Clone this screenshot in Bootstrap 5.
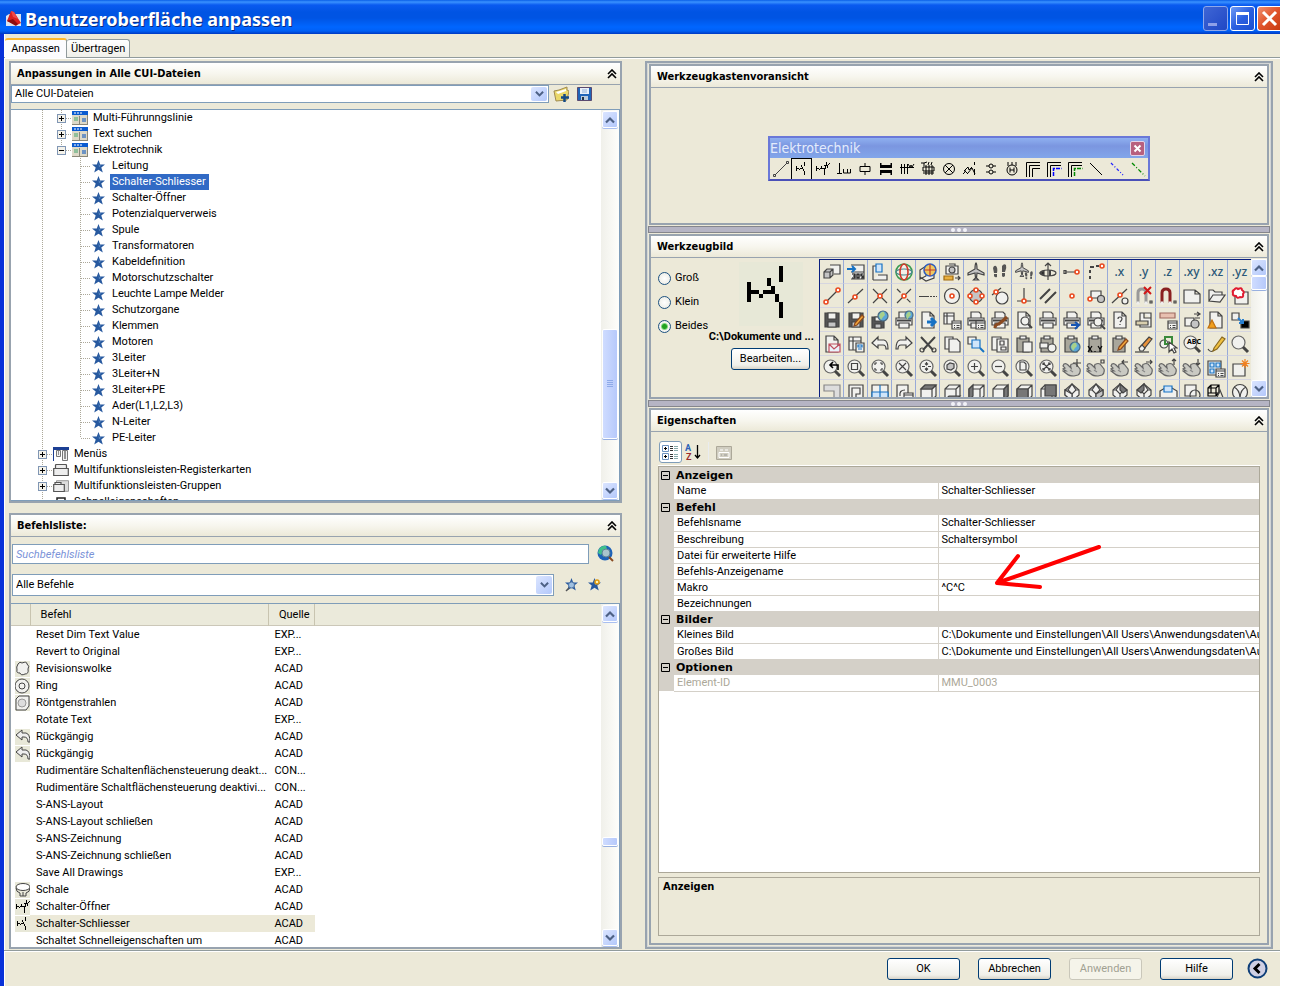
<!DOCTYPE html>
<html lang="de">
<head>
<meta charset="utf-8">
<meta name="viewport" content="width=device-width, initial-scale=1">
<title>Benutzeroberfläche anpassen</title>
<link href="https://cdn.jsdelivr.net/npm/bootstrap@5.3.0/dist/css/bootstrap.min.css" rel="stylesheet">
<style>
:root{--face:#ece9d8;--edge:#98a3af;--field:#7f9db9;--grid:#d4d0c8}
body{font-family:Roboto,"Liberation Sans",Arial,sans-serif;font-size:11px;line-height:16px;color:#000;background:#fff}
button{color:inherit}
svg{display:block;flex:none}
.dialog-window{height:100vh;min-height:900px;margin-right:13px;background:var(--face);border-left:4px solid #0831d9;box-shadow:inset 1px 0 #fff}
.title-strip{height:34px;margin-left:-4px;padding:6px 0 0 6px;background:linear-gradient(#0a5fe8 0,#3a92ff 2px,#0a5af0 5px,#0054e3 12px,#0054e3 18px,#0066ff 27px,#0060f5 31px,#0038c0 34px)}
.title-strip h1{font:bold 18px/26px "Noto Sans","Open Sans",sans-serif;color:#fff;text-shadow:1px 1px #0a2a80;margin:0}
.title-logo{margin:4px 3px 0 0}
.cap-group{gap:2px}
.cap-btn{width:25px;height:25px;padding:0;border:1px solid #fff;border-radius:3px;background:linear-gradient(135deg,#6f9bf5,#2a5fe0 50%,#1a4fd0)}
.cap-btn.dim{border-color:#8fa8ea;background:linear-gradient(135deg,#3f66d5,#1f47c5)}
.cap-btn.stop{border-right:0;border-radius:3px 0 0 3px;width:23px;background:linear-gradient(135deg,#f09070,#e0532b 50%,#c83a10)}
.tabs-strip{height:24px;padding:4px 0 0 1px;border-bottom:1px solid #919b9c}
.tab-btn{height:18px;padding:0 4px;border:1px solid #919b9c;border-left:0;border-bottom:0;border-radius:3px 3px 0 0;background:linear-gradient(#fff,#f0f0ea);line-height:16px;white-space:nowrap;min-width:62px}
.tab-btn.active{height:20px;border-top:2px solid #ffb92c;background:#fcfcfe;margin-bottom:-1px}
.page-area{display:grid;grid-template-columns:minmax(0,613fr) minmax(0,628fr);grid-template-rows:minmax(0,1fr);border-bottom:1px solid #919b9c;border-top:1px solid #fff;padding:2px 7px 1px 5px;column-gap:23px;box-shadow:0 1px #fff}
.left-side{gap:10px}
.right-side{border:2px solid var(--edge);outline:1px solid #d3d6d6;outline-offset:-3px;padding:1px 2px 2px;gap:1px}
.group-box{border:2px solid var(--edge);min-width:0;min-height:0;overflow:hidden}
.upper{flex:442 1 0}.lower{flex:435 1 0}
.group-head{height:22px;flex:none;padding:0 3px 0 6px;background:linear-gradient(#fff,#f7f6ee 50%,#ece9d8);border-bottom:1px solid var(--edge)}
.group-head h2{font:bold 11px/16px "DejaVu Sans Condensed","DejaVu Sans",sans-serif;margin:0}
.plain-btn{border:0;background:none;padding:0}
.file-line{margin-bottom:6px}
.file-tools{gap:8px;padding:0 28px 0 4px}
.search-line{margin-top:7px;padding:0 5px 0 1px;gap:8px}
.filter-line{margin:10px 0 7px;padding-left:1px}
.filter-tools{gap:9px;padding:0 18px 0 11px}
.xp-combo{position:relative}
.xp-combo .form-select,.xp-input{border:1px solid var(--field);border-radius:0;background:#fff;font-size:11px;line-height:16px;padding:0 20px 0 3px;color:#000;min-height:0}
.xp-combo .arrow{position:absolute;right:2px;top:2px;bottom:2px;pointer-events:none}
.arrow,.sb-btn{width:16px;display:flex;align-items:center;justify-content:center;border:0;border-radius:2px;padding:0;background:linear-gradient(135deg,#dbe5ff,#b3c8fb)}
.h18{height:18px}.h20{height:20px}.h22{height:22px}
.xp-input::placeholder{color:#7b93d8;font-style:italic;opacity:1}
.sb{width:18px;flex:none;background:linear-gradient(90deg,#f0f0ea,#fefefb);padding:1px}
.sb.slim{width:16px;padding:0}
.sb-btn{height:17px;flex:none;border:1px solid #fff;box-shadow:0 1px #a9bff0}
.sb-thumb{flex:none;border:1px solid #fff;border-radius:2px;background:linear-gradient(90deg,#cfdcff,#b6c9fb);box-shadow:0 1px #98b0e0;display:flex;align-items:center;justify-content:center}
.thumb-l{height:110px}.thumb-s{height:9px}.thumb-m{height:14px}
.tree-box{border-top:1px solid var(--field);border-right:1px solid var(--field);border-bottom:1px solid var(--field);background:#fff;min-height:0}
.tree{list-style:none;margin:0;padding:0 0 0 22px;overflow:hidden;min-height:0}
.tree li{height:16px;display:flex;align-items:center;white-space:nowrap}
.guide{position:relative;width:19px;height:16px;flex:none}
.guide.v::before,.guide.e::before{content:"";position:absolute;left:9px;top:0;width:1px;height:16px;background:repeating-linear-gradient(#aca899 0 1px,transparent 1px 2px)}
.guide.e::before{height:8px}
.guide.h::after{content:"";position:absolute;left:10px;right:0;top:8px;height:1px;background:repeating-linear-gradient(90deg,#aca899 0 1px,transparent 1px 2px)}
.guide svg{position:absolute;left:5px;top:4px;z-index:1}
.node-icon{margin-left:1px}
.node-text{margin-left:2px;padding:0 2px 0 3px}
.leaf .node-text{margin-left:4px;padding:0 3px 0 2px}
.picked{background:#316ac5;color:#fff}
.list-box{border-top:1px solid var(--field);border-right:1px solid var(--field);background:#fff;min-height:0}
.head-wrap{background:linear-gradient(#ebeadb 0 21px,#cbc7b8 21px 22px,#fff 22px)}
.cmd-table{table-layout:fixed;width:304px;border-collapse:collapse}
.cmd-table td,.cmd-table th{padding:0;height:17px;line-height:16px;white-space:nowrap;overflow:hidden;font-weight:400;text-align:left}
.cmd-table thead th{height:22px;padding-left:10px;border-right:1px solid #c8c4b0}
.cmd-table td:nth-child(2),.cmd-table td:nth-child(3){padding-left:6px}
.cmd-table tr.sel td+td{background:#ece9d8}
.c-ic{width:19px}.c-name{width:238px}.c-src{width:46px}
.cmd-table td svg{margin-left:4px;background:#e8e8d8}
.splitter{height:7px;margin:0 -1px;flex:none;border:1px solid #85868c;background:#b5b4c4;display:flex;align-items:center;justify-content:center}
.preview-zone{height:135px;padding-top:6px}
.floatbar{border:2px solid #6a78d8;border-bottom-color:#4a50b8;background:#6b86dc}
.floatbar-head{height:20px;background:linear-gradient(#8fb0f0,#7b96e0 40%,#82a6ea);color:#e4ecfc;font:14px/20px "DejaVu Sans Condensed","DejaVu Sans",sans-serif;padding-right:3px}
.floatbar-close{width:15px;height:15px;border:1px solid #e4d4e8;border-radius:2px;background:#b8607e;padding:0}
.tool{width:21px;height:21px;border:0;padding:0;background:var(--face);display:flex;align-items:center;justify-content:center}
.tool.on{border:1px solid #000;border-bottom:0}
.image-zone{height:139px;padding-top:1px}
.pick-col{width:168px;flex:none;padding-right:5px}
.radio-col{padding:7px 0 0 7px}
.form-check-xp{display:flex;align-items:center;height:24px;gap:4px}
.form-check-xp .form-check-input{width:13px;height:13px;margin:0;border:1px solid #1c5180;background:radial-gradient(#fff,#e8e8e0)}
.form-check-xp .form-check-input:checked{background:radial-gradient(circle,#21a121 0 2px,#7ed67e 3px,#f4f4f0 4px)}
.thumb-col{width:104px;padding-top:3px;gap:4px}
.glyph-big{background:#e7e8d7;margin-right:11px}
.img-path{font:bold 11px/14px Roboto,"Liberation Sans",sans-serif;white-space:nowrap}
.xp-btn{border:1px solid #003c74;border-radius:3px;background:linear-gradient(#fff,#f0f0ea 80%,#d8d4c8);font-size:11px;line-height:18px;padding:0;height:22px;width:73px;color:#000}
.xp-btn.wide{width:79px;margin-right:4px}
.xp-btn:disabled{border-color:#c9c7ba;background:#f5f4ea;color:#a1a192;opacity:1}
.palette{border-top:1px solid #0a1f80;border-left:1px solid #0a1f80;display:grid;grid-template-columns:repeat(18,24px);grid-auto-rows:24px;overflow:hidden;min-width:0}
.palette button{border:0;border-right:1px solid #98aad8;border-bottom:1px solid #d6d6e0;background:var(--face);padding:0;display:flex;align-items:center;justify-content:center;font:500 12px/16px "Noto Sans",sans-serif;color:#2b5878}
.prop-body{padding:9px 7px 7px}
.prop-tools{height:25px;padding:0 0 2px 1px;gap:3px;border-bottom:1px solid #fff}
.tool-on{border:1px solid #7f9db9;border-radius:3px;background:#fff;width:23px;height:22px;padding:2px}
.prop-frame{border:1px solid #aca899;background:#fff;min-height:0}
.prop-table{table-layout:fixed;width:100%;border-collapse:collapse}
.prop-table td,.prop-table th{height:16px;line-height:15px;padding:0 0 0 3px;white-space:nowrap}
.prop-table td{overflow:hidden;border-bottom:1px solid var(--grid)}
.prop-table .gut,.prop-table .cat th{background:var(--grid);border:0;padding-left:2px}
.prop-table .cat th{font:bold 11px/15px "DejaVu Sans","Liberation Sans",sans-serif}
.prop-table td+td+td{border-left:1px solid var(--grid)}
.prop-table td.marked{overflow:visible;position:relative}
.pointer-note{position:absolute;left:52px;top:-38px;pointer-events:none}
.p-g{width:15px}.p-n{width:44%}
.faded{color:#aca899}
.desc-box{height:59px;flex:none;border:1px solid #aca899;padding:0 4px;font:bold 11px/18px "DejaVu Sans Condensed","DejaVu Sans",sans-serif}
.foot{height:35px;padding:0 12px 0 0;flex:none;gap:14px}
.foot-btns{gap:18px}
</style>
<script src="https://cdn.jsdelivr.net/npm/bootstrap@5.3.0/dist/js/bootstrap.bundle.min.js"></script>
</head>
<body>
<svg width="0" height="0" class="position-absolute" aria-hidden="true">
<symbol id="up2" viewBox="0 0 10 10"><path d="M1 5l4-4 4 4M1 9l4-4 4 4" fill="none" stroke="#000" stroke-width="1.6"/></symbol>
<symbol id="dn" viewBox="0 0 10 8"><path d="M1 1.500l4 4 4-4" fill="none" stroke="#4d6185" stroke-width="2.200"/></symbol>
<symbol id="up" viewBox="0 0 10 8"><path d="M1 6.500l4-4 4 4" fill="none" stroke="#4d6185" stroke-width="2.200"/></symbol>
<symbol id="plus" viewBox="0 0 9 9"><rect x=".5" y=".5" width="8" height="8" fill="#f4f2ea" stroke="#8096b4"/><path d="M2 4.500h5M4.500 2v5" stroke="#000"/></symbol>
<symbol id="minus" viewBox="0 0 9 9"><rect x=".5" y=".5" width="8" height="8" fill="#f4f2ea" stroke="#8096b4"/><path d="M2 4.500h5" stroke="#000"/></symbol>
<symbol id="cat" viewBox="0 0 9 9"><path d="M.5.5h8v8h-8zM2 4.500h5" fill="none" stroke="#000"/></symbol>
<symbol id="star" viewBox="0 0 13 13"><path d="M6.500 0l1.700 4.500H13L9.300 7.600l1.500 5-4.300-2.900-4.300 2.900 1.500-5L0 4.500h4.800z" fill="#27599f"/><path d="M6.500 3l1 2.500h2L7 7z" fill="#5f8fc8"/></symbol>
<symbol id="bar" viewBox="0 0 16 14"><path fill="#0a5bd0" d="M0 0h16v4H0z"/><path d="M2 2h2M5 2h2M8 2h2" stroke="#fff"/><path fill="#ddd9c8" d="M0 4h16v9H0z"/><path d="M0 13.500h16M7.500 5v8M15.500 4v9" stroke="#8a8778"/><path fill="#8fbf9a" d="M2 6h4v4H2z"/><path fill="#6c93c4" d="M10 7h4v4h-4z"/></symbol>
<symbol id="menu" viewBox="0 0 16 14"><path fill="#1c3f94" d="M0 0h16v3H0z"/><path d="M.5 0v14" stroke="#1c3f94"/><path d="M3.500 3.500h4v6h-4zM9.500 3.500h5v10h-5z" fill="#f2f2f2" stroke="#777"/><path d="M5 5h1M5 7h1M11 5h2M11 7h2M11 9h2M11 11h2" stroke="#333"/></symbol>
<symbol id="rtab" viewBox="0 0 16 12"><path d="M.7 4.500h14.600v7H.7zM2.500 4V1.500q0-1 1-1h9q1 0 1 1V4" fill="#eee" stroke="#555" stroke-width="1.200"/></symbol>
<symbol id="rgrp" viewBox="0 0 16 12"><path d="M3.500 4V.7h12v10.600H11" fill="#ddd" stroke="#999"/><path d="M.7 4.500h10.600v7H.7zM2 4V2.500h6v2" fill="#eee" stroke="#555" stroke-width="1.200"/></symbol>
<symbol id="quick" viewBox="0 0 16 14"><path d="M4 3h8v10H4z" fill="#fff" stroke="#222" stroke-width="1.500"/><path d="M6 6h4M6 9h4" stroke="#222"/></symbol>
<symbol id="contact" viewBox="0 0 16 16"><path shape-rendering="crispEdges" stroke="none" fill="#000" d="M2 5h1v5H2zM3 7h2v1H3zM5 8h1v1H5zM6 7h3v1H6zM7 4h1v2H7zM8 6h1v1H8zM9 8h1v2H9zM10 1h1v4h-1zM10 10h1v4h-1z"/></symbol>
</svg>

<div class="dialog-window d-flex flex-column">
  <header class="title-strip d-flex align-items-start flex-shrink-0">
    <svg class="title-logo" width="16" height="18" viewBox="0 0 16 18"><path fill="#dce4ee" d="M0 6l3-2h12v12H0z"/><path fill="#d82020" d="M1 11L5 1l3 1 7 11-4 2z"/><path fill="#8e0d10" d="M1 11l6-2 5 5-2 2z"/><path fill="#f04848" d="M5 1l3 1 4 7-5-2z"/></svg>
    <h1 class="flex-grow-1 text-nowrap">Benutzeroberfläche anpassen</h1>
    <div class="cap-group d-flex">
      <button class="cap-btn dim" aria-label="Minimieren"><svg width="23" height="23"><path fill="#8fa0e8" d="M4 16h9v3H4z"/></svg></button>
      <button class="cap-btn" aria-label="Maximieren"><svg width="23" height="23"><path d="M5.500 6.500h12v11h-12z" fill="none" stroke="#fff"/><path fill="#fff" d="M5 5h13v3H5z"/></svg></button>
      <button class="cap-btn stop" aria-label="Schließen"><svg width="21" height="23"><path d="M5 5l13 13M18 5L5 18" stroke="#fff" stroke-width="3"/></svg></button>
    </div>
  </header>

  <div class="tabs-strip d-flex align-items-end flex-shrink-0" role="tablist">
    <button class="tab-btn active" role="tab">Anpassen</button>
    <button class="tab-btn" role="tab">Übertragen</button>
  </div>

  <main class="page-area flex-grow-1 overflow-hidden">
    <div class="left-side d-flex flex-column">
      <section class="group-box upper d-flex flex-column">
        <div class="group-head d-flex align-items-center justify-content-between"><h2>Anpassungen in Alle CUI-Dateien</h2><button class="plain-btn" aria-label="Einklappen"><svg width="10" height="10"><use href="#up2"/></svg></button></div>
        <div class="file-line d-flex align-items-center flex-shrink-0">
          <div class="xp-combo flex-grow-1"><select class="form-select h18" aria-label="CUI-Dateien"><option>Alle CUI-Dateien</option></select><span class="arrow"><svg width="9" height="8"><use href="#dn"/></svg></span></div>
          <div class="file-tools d-flex">
            <button class="plain-btn" aria-label="Datei laden"><svg width="16" height="16"><path d="M1 5l5-1 8-3v3l2 1-2 9-11 1z" fill="#ead86a" stroke="#a08a50"/><path d="M3 6l10-3v2L5 8z" fill="#fff"/><path d="M11.500 8v8M8 11.500h8" stroke="#134a86" stroke-width="2.500"/></svg></button>
            <button class="plain-btn" aria-label="Speichern"><svg width="15" height="16"><path fill="#1f64b8" stroke="#5a4a70" d="M.5 1.500h14v13H.5z"/><path fill="#e9f0fa" d="M3 2h9v6H3z"/><path d="M5 4h5M5 6h5" stroke="#8fb0d8"/><path fill="#bcd" d="M4 10h7v4H4z"/><path fill="#234" d="M5 11h2v3H5z"/></svg></button>
          </div>
        </div>
        <div class="tree-box d-flex flex-grow-1">
          <ul class="tree flex-grow-1" id="tree"></ul>
          <div class="sb d-flex flex-column"><button class="sb-btn" aria-label="Nach oben"><svg width="10" height="8"><use href="#up"/></svg></button><span style="flex:203"></span><span class="sb-thumb thumb-l"><svg width="6" height="8"><path d="M0 .5h6M0 2.500h6M0 4.500h6M0 6.500h6" stroke="#8eaae8"/></svg></span><span style="flex:44"></span><button class="sb-btn" aria-label="Nach unten"><svg width="10" height="8"><use href="#dn"/></svg></button></div>
        </div>
      </section>

      <section class="group-box lower d-flex flex-column">
        <div class="group-head d-flex align-items-center justify-content-between"><h2>Befehlsliste:</h2><button class="plain-btn" aria-label="Einklappen"><svg width="10" height="10"><use href="#up2"/></svg></button></div>
        <div class="search-line d-flex align-items-center flex-shrink-0">
          <input class="form-control xp-input h20" type="text" placeholder="Suchbefehlsliste" aria-label="Suchbefehlsliste">
          <button class="plain-btn" aria-label="Suchen"><svg width="18" height="18"><circle cx="8" cy="8" r="7.500" fill="#1d62b8"/><path d="M2 4q3-4 7-3l1 3-4 3-2 3-3-2z" fill="#3fc08a"/><circle cx="9" cy="8" r="4" fill="#a9c4cc" stroke="#5f8296"/><path d="M12 12l4 4" stroke="#8a4a20" stroke-width="2"/></svg></button>
        </div>
        <div class="filter-line d-flex align-items-center flex-shrink-0">
          <div class="xp-combo flex-grow-1"><select class="form-select h22" aria-label="Befehlskategorie"><option>Alle Befehle</option></select><span class="arrow"><svg width="9" height="8"><use href="#dn"/></svg></span></div>
          <div class="filter-tools d-flex">
            <button class="plain-btn" aria-label="Befehl suchen"><svg width="14" height="14"><use href="#star" width="13" height="13"/><circle cx="6.500" cy="7" r="3" fill="#9fc0e2" stroke="#4f74a4"/><path d="M4 10l-3 3" stroke="#555" stroke-width="1.500"/></svg></button>
            <button class="plain-btn" aria-label="Neuer Befehl"><svg width="14" height="14"><use href="#star" width="13" height="13"/><circle cx="9" cy="4" r="2" fill="#fff3b0" stroke="#e09a10" stroke-width="1.500"/></svg></button>
          </div>
        </div>
        <div class="list-box d-flex flex-grow-1">
          <div class="flex-grow-1 overflow-hidden head-wrap">
            <table class="cmd-table"><colgroup><col class="c-ic"><col class="c-name"><col class="c-src"></colgroup>
              <thead><tr><th aria-label="Symbol"></th><th>Befehl</th><th>Quelle</th></tr></thead><tbody id="cmds"></tbody></table>
          </div>
          <div class="sb d-flex flex-column"><button class="sb-btn" aria-label="Nach oben"><svg width="10" height="8"><use href="#up"/></svg></button><span style="flex:213"></span><span class="sb-thumb thumb-s"></span><span style="flex:83"></span><button class="sb-btn" aria-label="Nach unten"><svg width="10" height="8"><use href="#dn"/></svg></button></div>
        </div>
      </section>
    </div>

    <div class="right-side d-flex flex-column">
      <section class="group-box flex-shrink-0">
        <div class="group-head d-flex align-items-center justify-content-between"><h2>Werkzeugkastenvoransicht</h2><button class="plain-btn" aria-label="Einklappen"><svg width="10" height="10"><use href="#up2"/></svg></button></div>
        <div class="preview-zone d-flex align-items-center justify-content-center">
          <div class="floatbar">
            <div class="floatbar-head d-flex align-items-center justify-content-between"><span>Elektrotechnik</span><button class="floatbar-close" aria-label="Schließen"><svg width="13" height="13"><path d="M3.500 3.500l6 6M9.500 3.500l-6 6" stroke="#fff" stroke-width="2"/></svg></button></div>
            <div class="d-flex" id="elektro"></div>
          </div>
        </div>
      </section>
      <div class="splitter"><svg width="16" height="4"><g fill="#f2f2f8"><circle cx="2" cy="2" r="2"/><circle cx="8" cy="2" r="2"/><circle cx="14" cy="2" r="2"/></g></svg></div>
      <section class="group-box flex-shrink-0">
        <div class="group-head d-flex align-items-center justify-content-between"><h2>Werkzeugbild</h2><button class="plain-btn" aria-label="Einklappen"><svg width="10" height="10"><use href="#up2"/></svg></button></div>
        <div class="image-zone d-flex">
          <div class="pick-col d-flex justify-content-between">
            <div class="radio-col">
              <label class="form-check-xp"><input class="form-check-input" type="radio" name="size">Groß</label>
              <label class="form-check-xp"><input class="form-check-input" type="radio" name="size">Klein</label>
              <label class="form-check-xp"><input class="form-check-input" type="radio" name="size" checked>Beides</label>
            </div>
            <div class="thumb-col d-flex flex-column align-items-end">
              <svg class="glyph-big" width="64" height="64"><use href="#contact"/></svg>
              <div class="img-path">C:\Dokumente und ...</div>
              <button class="btn xp-btn wide">Bearbeiten...</button>
            </div>
          </div>
          <div class="palette flex-grow-1" id="palette"></div>
          <div class="sb slim d-flex flex-column"><button class="sb-btn" aria-label="Nach oben"><svg width="10" height="8"><use href="#up"/></svg></button><span class="sb-thumb thumb-m"></span><span class="flex-grow-1"></span><button class="sb-btn" aria-label="Nach unten"><svg width="10" height="8"><use href="#dn"/></svg></button></div>
        </div>
      </section>
      <div class="splitter"><svg width="16" height="4"><g fill="#f2f2f8"><circle cx="2" cy="2" r="2"/><circle cx="8" cy="2" r="2"/><circle cx="14" cy="2" r="2"/></g></svg></div>
      <section class="group-box flex-grow-1 d-flex flex-column">
        <div class="group-head d-flex align-items-center justify-content-between"><h2>Eigenschaften</h2><button class="plain-btn" aria-label="Einklappen"><svg width="10" height="10"><use href="#up2"/></svg></button></div>
        <div class="prop-body d-flex flex-column flex-grow-1 overflow-hidden">
          <div class="prop-tools d-flex align-items-center flex-shrink-0">
            <button class="tool-on" aria-label="Nach Kategorien"><svg width="17" height="16"><g fill="#fff" stroke="#6f93c0"><path d="M.5 1.500h6v6h-6zM.5 9.500h6v6h-6z"/></g><path d="M2 4.500h3M3.500 3v3M2 12.500h3M3.500 11v3" stroke="#000"/><path d="M8 2.500h3M8 4.500h3M8 6.500h3M8 10.500h3M8 12.500h3M8 14.500h3" stroke="#333"/><path d="M12 2.500h4M12 4.500h4M12 6.500h4M12 10.500h4M12 12.500h4M12 14.500h4" stroke="#8aa"/></svg></button>
            <button class="plain-btn" aria-label="Alphabetisch"><svg width="16" height="18"><text x="0" y="8" font-size="9" font-weight="bold" fill="#2a62b8">A</text><text x="1" y="17" font-size="9" font-weight="bold" fill="#9a2a2a">Z</text><path d="M12.500 2v13M10 12l2.500 3 2.500-3" stroke="#000" fill="none" stroke-width="1.300"/></svg></button>
            <span class="border-start border-secondary-subtle mx-1 h20"></span>
            <button class="plain-btn" aria-label="Eigenschaftenseiten" disabled><svg width="16" height="15"><path d="M.5 1.500h15v13H.5z" fill="#d0cdc0" stroke="#aca899"/><path d="M3 7.500h10v5H3zM4 5h3M9 5h3" fill="none" stroke="#fff"/><path d="M5 10h1M8 10h3" stroke="#999"/></svg></button>
          </div>
          <div class="prop-frame flex-grow-1 mb-1 overflow-hidden">
            <table class="prop-table"><colgroup><col class="p-g"><col class="p-n"><col></colgroup><tbody id="props"></tbody></table>
          </div>
          <div class="desc-box">Anzeigen</div>
        </div>
      </section>
    </div>
  </main>

  <footer class="foot d-flex align-items-center justify-content-end">
    <div class="foot-btns d-flex"><button class="btn xp-btn">OK</button><button class="btn xp-btn">Abbrechen</button><button class="btn xp-btn" disabled>Anwenden</button><button class="btn xp-btn">Hilfe</button></div>
    <button class="plain-btn" aria-label="Weniger"><svg width="21" height="21"><circle cx="10.500" cy="10.500" r="9" fill="#cfd0e4" stroke="#0f3f78" stroke-width="2"/><path d="M12.500 6l-4.500 4.500 4.500 4.500" fill="none" stroke="#000" stroke-width="3"/></svg></button>
  </footer>
</div>

<script>
const el = id => document.getElementById(id);
const use = (id, w, h) => `<svg width="${w}" height="${h}"><use href="#${id}"/></svg>`;

/* customization tree */
const bars = [['Multi-Führunngslinie','plus'],['Text suchen','plus'],['Elektrotechnik','minus']];
const leaves = ['Leitung','Schalter-Schliesser','Schalter-Öffner','Potenzialquerverweis','Spule','Transformatoren','Kabeldefinition','Motorschutzschalter','Leuchte Lampe Melder','Schutzorgane','Klemmen','Motoren','3Leiter','3Leiter+N','3Leiter+PE','Ader(L1,L2,L3)','N-Leiter','PE-Leiter'];
const tops = [['Menüs','menu',14],['Multifunktionsleisten-Registerkarten','rtab',12],['Multifunktionsleisten-Gruppen','rgrp',12],['Schnelleigenschaften','quick',14]];
el('tree').innerHTML =
  bars.map(([t, x], i) => `<li><span class="guide v"></span><span class="guide h ${i < 2 ? 'v' : 'e'}">${use(x,9,9)}</span><span class="node-icon">${use('bar',16,14)}</span><span class="node-text">${t}</span></li>`).join('') +
  leaves.map((t, i) => `<li class="leaf"><span class="guide v"></span><span class="guide"></span><span class="guide h ${i < 17 ? 'v' : 'e'}"></span><span class="node-icon">${use('star',15,13)}</span><span class="node-text${i === 1 ? ' picked' : ''}">${t}</span></li>`).join('') +
  tops.map(([t, x, h], i) => `<li><span class="guide v ${i < 3 ? 'h' : ''}">${i < 3 ? use('plus',9,9) : ''}</span><span class="node-icon">${use(x,16,h)}</span><span class="node-text">${t}</span></li>`).join('');

/* drawing fragments on a 20 x 20 field */
const p = (d, a = '') => `<path d="${d}" ${a}/>`;
const W = 'fill="#f1f1ee"', G = 'fill="#c4c4c4"', D = 'fill="#777"', BL = 'stroke="#1672c4"', BF = 'fill="#cfe5fa" stroke="#1672c4"';
const red = (x, y) => `<circle cx="${x}" cy="${y}" r="2" fill="#fff" stroke="#ea4a20" stroke-width="1.600"/>`;
const c = (x, y, r, a = '') => `<circle cx="${x}" cy="${y}" r="${r}" ${a}/>`;
const page = p('M4 2h8l4 4v12H4zM12 2v4h4', W);
const dlg = p('M10 11h9v8h-9z', W) + p('M10 13h9M12 15.500h1M14.500 15.500h3M12 17.500h1M14.500 17.500h3');
const disk = p('M3 3h14v14H3z', 'fill="#555"') + p('M6 3h8v6H6z', W) + p('M6 12h8v5H6z', G);
const diskS = p('M2 7h12v11H2z', 'fill="#555"') + p('M5 7h6v4H5z', W) + p('M5 14h6v4H5z', G);
const printer = p('M5 8V2h8l2 2v4M2 8h16v7H2z', W) + p('M5 13h10v5H5z', W) + p('M3 10.500h14', 'stroke-width="2"');
const globe = (x, y, r) => c(x, y, r, 'fill="#5aa6d8" stroke="#4a6a80"') + p(`M${x-r+1} ${y}q2-${r} ${r}-${r-1}l1 3-2 2-2 3z`, 'fill="#a7d08a" stroke="none"');
const mag = s => c(8.5, 8.5, 6.5, W + ' stroke="#666"') + p('M13 13l5 5', 'stroke="#444" stroke-width="3"') + s;
const clip = p('M3 4h12v14H3z', 'fill="#a9a79c"') + p('M6 2h6v3H6z', W);
const hand = s => p('M2 6q2-1 4 1l3 3q-1-4 1-4 2-1 4 0l4 5q1 4-2 6l-4 1q-5 0-7-2l-4-3h3l-3-2 2-1-2-2z', 'fill="#c9c9c2" stroke="#666"') + p('M8 12l3 2', 'stroke="#888"') + s;
const cube = s => p('M3 7l4-4h11v11l-4 4H3zM3 7h11v11M14 7l4-4', W) + s;
const iso = s => p('M10 2l7 6v5l-7 6-7-6V8z', W) + p('M10 2l4 6-4 4-4-4zM10 12v7M3 8h3M14 8h3') + s;
const pen = p('M9 13l7-8 2 2-7 8-3 1z', 'fill="#f5a83a" stroke="#8a4a20"');
const plane = p('M10 1q1 1 1 6l7 4v2l-7-2-.5 5 2 2h-5l2-2L9 11l-7 2v-2l7-4q0-5 1-6z', G);
const feet = p('M3 6q1-3 3-2 2 2 1 7H4zM4 12h3v3q-2 1-3-1zM12 4q2-3 4-1 1 3-1 7h-3zM12 11h3v3q-2 2-3 0z', 'fill="#555" stroke="none"');
const arrow = p('M2 9l6-6v3h6q4 1 4 9h-2q0-4-3-4H8v3z', W);
const undo = arrow, redo = `<g transform="matrix(-1 0 0 1 20 0)">${arrow}</g>`;
const magnet = a => p('M4 17V7q0-4 4-4t4 4v10', `stroke="${a}" stroke-width="3"`) + p('M2.500 17h3M10.500 17h3', 'stroke="#eee" stroke-width="3"') + p('M16 15h2v2h-2z');
const inPage = p('M2 3h10v11H2z', W);
const rows = [
 [p('M8 3h10v9h-6', W)+p('M2 10l3-3h6v6l-3 3H2zM2 10h6v6M8 10l3-3', G), p('M5 3h13v14H5M5 10h13', W)+p('M1 7h7M6 4l3 3-3 3', BL+' stroke-width="2"')+p('M6 12h3v4H6M7 14h2M11 12h2v4h-2zM17 12h-2v2h2v2h-2', 'stroke="#000"'), p('M3 18V4h3M3 18h14v-5H8', W)+p('M6 2h6v8H6z', BF), c(10,10,8,'fill="#f3f0e8" stroke="#3a9a50" stroke-width="1.600"')+'<ellipse cx="10" cy="10" rx="8" ry="3" stroke="#4a8a90"/><ellipse cx="10" cy="10" rx="4" ry="8" stroke="#d03a2a" stroke-width="1.600"/>', p('M2 8l6-4v10l-6 3zM2 8v7l6 4 8-3v-4', W)+c(12,8,6,'fill="#f0c860" stroke="#3060c0" stroke-width="1.600"')+p('M6 8h12M12 2v12','stroke="#c03a2a"'), p('M4 4h12v8H4zM7 2h6v2', W)+c(10,8,3,G)+p('M2 14h9v4H2z','fill="#e8b040" stroke="#a06a10"')+p('M13 16h5M16 14l2 2-2 2'), plane, feet, `<g transform="scale(.8)">${plane}</g>`+`<g transform="translate(9 8) scale(.6)">${feet}</g>`, p('M10 2v16M7 4l3-3 3 3','')+'<ellipse cx="10" cy="11" rx="8" ry="3"/>'+p('M2 11l4-2v4z','fill="#222"')+p('M12 8v6','stroke-width="2"'), p('M3 10h10M2 8.500h2v3H2z')+red(15,10), p('M4 17v-3M4 11V8M4 5h4M10 4h3','stroke-width="2"')+red(16,4), '.x','.y','.z','.xy','.xz','.yz'],
 [p('M3 17L17 3')+red(4,16)+red(16,4), p('M2 17L17 3')+red(9,11), p('M3 3l14 14M17 3L3 17')+red(10,10), p('M3 3l14 14','stroke-dasharray="5 2"')+p('M17 3L3 17','stroke-dasharray="9 2"')+red(10,10), p('M1 10.500h10M12 10.500h2M15 10.500h2M18 10.500h1'), c(10,10,7.5,W)+red(10,10), c(10,10,6.5,G)+red(10,4)+red(10,16)+red(4,10)+red(16,10), c(12,12,6,W)+p('M2 9l9-7')+red(6,6), p('M10 2v13M3 15h14')+red(10,15), p('M2 13L12 3M7 17L18 6','stroke-width="2"'), red(10,10), p('M5 5h10v7H5z',W)+c(15,13,3.5,G)+red(4,13), p('M2 17L17 3')+c(15,15,3,W)+red(10,9), magnet('#999')+p('M10 1l7 7M17 1l-7 7','stroke="#d01818" stroke-width="2"'), magnet('#8a2020'), p('M2 4h11l5 4v9H2zM13 4v4h5',W), p('M3 15V4h4l2 2h7v3M3 15l4-6h12l-5 7z',W), p('M5 6h13v12H5z',W)+p('M4 4q2-3 4-1 4-2 4 1 3 2 1 4 1 4-3 3-3 2-4-1-4 0-3-3-1-2 1-3z','fill="#fff" stroke="#e01a30" stroke-width="2"')],
 [disk, disk+pen, diskS+globe(13,6,5), printer+globe(15,5,4), page+p('M9 12h7M13 8l4 4-4 4','stroke="#1672c4" stroke-width="3"'), inPage+p('M5 3v11M2 6h10')+dlg, printer+dlg, printer+p('M5 18q0-4 4-4l8-7','stroke="#8a4a20" stroke-width="3"'), page+c(11,11,4,W)+p('M14 14l4 4','stroke-width="2"'), printer, printer+p('M9 15h7M13 12l4 3-4 4','stroke="#1656b4" stroke-width="2"'), printer+c(12,12,4,W)+p('M15 15l4 4','stroke-width="2"'), page+p('M8 9q0-2 2-2t2 2q0 1-2 3M10 14v1'), p('M6 3h11v14H6zM10 3v5h7',W)+p('M2 11h12v4H2z','fill="#d9cfae"'), p('M2 3h15v5H2z','fill="#e8c0b0" stroke="#a06a60"')+dlg, p('M3 8h9v8H3z',W)+c(13,14,4,G)+p('M12 4h5M15 2l3 2-3 2M18 8h-5'), page+p('M6 10l-4 8h8z','fill="#f0a020" stroke="#c07010"'), p('M11 11h8v7h-8z','fill="#000"')+p('M2 3h7v7H2z',W)+p('M8 8l5 5M13 9v4H9','stroke="#2a80d0" stroke-width="2"')],
 [page+p('M7 10h11v8H7zM7 10l5 5 6-5','fill="#e9f3fb" stroke="#c05060"'), p('M3 3h12v13H3zM3 7h12M7 3v13',W)+p('M10 9h8v9h-8z',W)+p('M12 11h4v2h-4zM12 15h4',BL), undo, redo, p('M3 3l12 13M17 3L5 16','stroke-width="2"')+c(4,16,2)+c(16,16,2), p('M3 3h8v12H3z',W)+p('M7 5h8l3 3v10H7z',W), p('M2 3h8v7H2z',W)+p('M6 6h8v8H6z',BF)+p('M14 14l4 4',BL+' stroke-width="2"'), p('M2 3h9v13H2z',W)+p('M7 5h11v13H7z',W)+p('M10 7h4v4h-4zM11 13h5v3h-5z'), clip+p('M9 8h9v10H9z',W), clip+p('M2 9h8v5H2z',W)+c(14,14,4,W), clip+globe(13,13,5), clip+p('M2 12l4 6M6 12l-4 6M9 17v1M12 12l2 3 2-3M14 15v3','stroke="#000"'), clip+pen, p('M1 18h14')+p('M7 12l8-9 3 2-8 10z','fill="#e8923a"')+p('M5 14l3-3 3 3-2 3H6z',W), c(6,10,4,W)+p('M7 3h7v7H7z','stroke="#3a8a3a" stroke-width="2"')+p('M11 8v10l3-3 2 4 2-1-2-4h3z','fill="#fff"'), mag('<text x="5" y="10" font-size="7" font-weight="bold" fill="#000" stroke="none">ABC</text>'), p('M2 15q3 5 7 0')+p('M8 14l8-11 3 2-8 10-4 2z','fill="#f0c040" stroke="#8a6a20"'), mag('')],
 [mag(p('M8 7h8v5M11 4L8 7l3 3','stroke="#000" stroke-width="1.600"')), mag(p('M5.500 5.500h6v6h-6z')), mag(p('M5 7V5h2M10 5h2v2M12 10v2h-2M7 12H5v-2')), mag(p('M5 5l7 7M12 5l-7 7')), mag(p('M8.500 4v3M8.500 10v3M4 8.500h3M10 8.500h3M7 5.500l1.500 1.500 1.500-1.500M7 11.500l1.500-1.500 1.500 1.500')), mag(p('M5 7l3-2 4 1v4l-3 2-4-1z',G)), mag(p('M5 8.500h7M8.500 5v7')), mag(p('M5 8.500h7')), mag(p('M6 4h4l2 2v6H6z',W)), mag(p('M5 5l7 7M12 5l-7 7M5 7V5h2M12 7V5h-2M5 10v2h2M12 10v2h-2')), hand(p('M15 1v8M11 5h8')), hand(p('M15 2h3v3h-3z')), hand(p('M12 4h6M14 2l-2 2 2 2')), hand(p('M12 4h6M16 2l2 2-2 2')), hand(p('M16 1v6M14 3l2-2 2 2')), hand(p('M16 1v6M14 5l2 2 2-2')), p('M2 3h13v14H2z',W)+p('M4 5h4v4H4zM10 5h4v4h-4zM4 11h4v4H4z',BF)+dlg, p('M3 6h12v12H3z',W)+p('M15 1v9M10.500 5.500h9M12 2.500l6 6M18 2.500l-6 6','stroke="#f08020"')],
 [p('M2 3h16v15h-6V9H2z','fill="#ddd" stroke="#888"'), p('M3 3h14v14H3z',W)+p('M6 17V6h8v6h-4v5'), p('M2 3h16v15H2z',W)+p('M2 10h16v8H2zM10 3v15',BF), p('M3 3h11v14H3z',W)+p('M6 14q-1-6 5-6')+dlg, cube(p('M3 7l4-4h11l-4 4z',D)), cube(p('M3 18l4-4h11l-4 4z',D)), cube(p('M3 7l4-4v11l-4 4z',D)), cube(p('M14 7l4-4v11l-4 4z',D)), cube(p('M3 7h11v11H3z',D)), cube(p('M7 3h11v11H7z',D)), iso(p('M3 8l7 4v7l-7-6z',W)), iso(p('M10 12l7-4v5l-7 6z',G)), iso(p('M10 2l7 6-4 3-3-3z',D)), iso(p('M10 2L3 8l4 3 3-3z',D)), p('M2 9l5-3h7l5 3v7l-5 2H7l-5-2z',W)+p('M6 4h8v6H6z',BF), p('M3 3h11v11H3z',W)+c(13,13,5), p('M2 6l3-3h8v8l-3 3H2zM2 6h8v8M10 6l3-3M5 3v8H2M5 11h8','stroke="#000"')+p('M14 8l-4 10h8z'), c(10,10,7.5,W)+p('M4 5q6 3 6 12M16 5q-6 3-6 12')]
];
const icon = (s, n = 20) => `<svg width="${n}" height="${n}" viewBox="0 0 20 20" fill="none" stroke="#444" stroke-width="1.200">${s}</svg>`;
el('palette').innerHTML = rows.flat().map((s, i) => `<button aria-label="Bild ${i + 1}">${s[0] === '.' ? s : icon(s)}</button>`).join('');

/* previewed toolbar, 16 x 16 symbols */
const K = 'stroke="#000"', F = 'fill="#000" stroke="none"';
const no = '<use href="#contact" width="16" height="16"/>';
const nc = p('M1 5h1v5H1zM2 7h2v1H2zM4 8h1v1H4zM5 7h5v1H5zM6 5h1v2H6zM10 4h1v4h-1zM9 8h1v6H9zM11 4h2v1h-2zM9 4h1v1H9zM13 3h1v1h-1zM14 2h1v1h-1zM11 1h1v3h-1zM12 5h1v2h-1z', F+' shape-rendering="crispEdges"');
const frame = p('M1.500 16V1.500H15M4.500 16V4.500H15M7.500 16V7.500H15',K);
const elek = [p('M2 14L14 2','stroke="#444"')+p('M.5 13.500h2v2h-2zM13.500.5h2v2h-2z','stroke="#444"'), no, nc, p('M3.500 2v11M1 12.500h5M7.500 8v4h4V8M11.500 12h3V8',K), p('M3 5.500h10v5H3zM8 2v3.500M8 10.500V14',K), p('M2 2h1.500v2h9V2H14v5H2zM2 9h12v5h-1.500v-2h-9v2H2z',F), p('M2.500 3v10M5.500 3v10M8.500 3v10M1 6.500h14M9 3l2 3 1-2 1 2 2-3',K), p('M1 2h3v3M4 2l3-1M9 1l-1 3M12 1l-1 3M3 6h11v4H3zM6 4v10M9 4v10M12 4v10M3 12h11',K), c(8,8,5.5,K)+p('M4 4l8 8M12 4l-8 8',K), p('M1 13l3-3-2 0 4-4 1 3 3-3M6 12l4-5 3 6M12.500 1v3M12.500 8v6M2 9l4 4',K), c(8,5,2,K)+c(8,11,2,K)+p('M3 5h3M10 5h3M3 11h3M10 11h3',K), c(8,9,5,K)+p('M6 6.500v5M10 6.500v5M6 9h4M4 1v4M8 1v3M12 1v4',K), frame, p('M1.500 16V1.500H15M4.500 16V4.500H15',K)+p('M7.500 15V7.500h8','stroke="#00f" stroke-width="1.500" stroke-dasharray="4 1"'), p('M1.500 16V1.500H15M4.500 16V4.500H15',K)+p('M7.500 15V7.500h8','stroke="#080" stroke-width="1.500" stroke-dasharray="4 1"'), p('M2 2l12 12',K), p('M2 2l12 12','stroke="#22f" stroke-width="1.300" stroke-dasharray="3 2 1 2"'), p('M2 2l13 13','stroke="#080" stroke-width="1.300" stroke-dasharray="4 2 1 2"')];
const small = (s, w = 16) => `<svg width="${w}" height="16" viewBox="0 0 ${w} 16" fill="none" stroke="#444">${s}</svg>`;
el('elektro').innerHTML = elek.map((s, i) => `<button class="tool${i === 1 ? ' on' : ''}" aria-label="Symbol ${i + 1}">${small(s)}</button>`).join('');

/* command list */
const back = p('M1 6l6-5v3h4q4 1 4 9h-2q0-5-4-5H7v3z','fill="#eee"');
const ic = {wolke:p('M3 3q2-3 4-1 5-2 5 1 3 2 1 5 1 5-3 5-4 2-5-1-4 0-3-3-1-3 1-6z',W), ring:c(7,8,7,W)+c(7,8,3), rx:p('M1 4l3-3h10v10l-3 4H1z',W)+c(7,8,4,'fill="#ddd" stroke="#999"'), back, schale:'<ellipse cx="8" cy="5" rx="7" ry="3.500" fill="#fff"/>'+p('M1 6q0 4 4 5v3h6v-3q4-1 4-5M8 10v4'), nc, no};
const cmds = [['','Reset Dim Text Value','EXP...'],['','Revert to Original','EXP...'],['wolke','Revisionswolke','ACAD'],['ring','Ring','ACAD'],['rx','Röntgenstrahlen','ACAD'],['','Rotate Text','EXP...'],['back','Rückgängig','ACAD'],['back','Rückgängig','ACAD'],['','Rudimentäre Schaltenflächensteuerung deakt...','CON...'],['','Rudimentäre Schaltflächensteuerung deaktivi...','CON...'],['','S-ANS-Layout','ACAD'],['','S-ANS-Layout schließen','ACAD'],['','S-ANS-Zeichnung','ACAD'],['','S-ANS-Zeichnung schließen','ACAD'],['','Save All Drawings','EXP...'],['schale','Schale','ACAD'],['nc','Schalter-Öffner','ACAD'],['no','Schalter-Schliesser','ACAD'],['','Schaltet Schnelleigenschaften um','ACAD']];
el('cmds').innerHTML = cmds.map(([i, n, s]) => `<tr class="${i === 'no' ? 'sel' : ''}"><td>${i ? small(ic[i], 15) : ''}</td><td>${n}</td><td>${s}</td></tr>`).join('');

/* property grid */
const path = 'C:\\Dokumente und Einstellungen\\All Users\\Anwendungsdaten\\Autodesk';
const note = '<svg class="pointer-note" width="115" height="48"><path d="M108 5L6 41M27 14L6 41l43 4" fill="none" stroke="#f00" stroke-width="4" stroke-linecap="round" stroke-linejoin="round"/></svg>';
const props = [['Anzeigen'],['Name','Schalter-Schliesser'],['Befehl'],['Befehlsname','Schalter-Schliesser'],['Beschreibung','Schaltersymbol'],['Datei für erweiterte Hilfe',''],['Befehls-Anzeigename',''],['Makro','^C^C'],['Bezeichnungen',''],['Bilder'],['Kleines Bild',path],['Großes Bild',path],['Optionen'],['Element-ID','MMU_0003']];
el('props').innerHTML = props.map(([n, v]) => v === undefined
  ? `<tr class="cat"><th class="gut">${use('cat',9,9)}</th><th colspan="2">${n}</th></tr>`
  : `<tr class="${n === 'Element-ID' ? 'faded' : ''}"><td class="gut"></td><td>${n}</td><td class="${n === 'Makro' ? 'marked' : ''}">${v}${n === 'Makro' ? note : ''}</td></tr>`).join('');
</script>
</body>
</html>
